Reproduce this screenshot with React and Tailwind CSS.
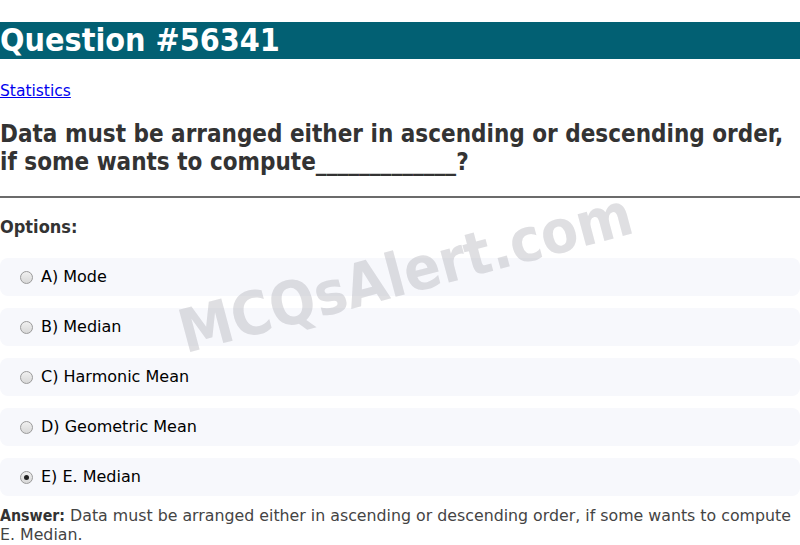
import React from "react";

const options = [
  { label: "A) Mode", checked: false },
  { label: "B) Median", checked: false },
  { label: "C) Harmonic Mean", checked: false },
  { label: "D) Geometric Mean", checked: false },
  { label: "E) E. Median", checked: true },
];

function Radio({ checked }) {
  return (
    <span className="relative inline-block w-[13px] h-[13px] rounded-full border border-[#9a9a9a] bg-gradient-to-b from-[#f0f0f0] to-[#d8d8d8] shrink-0">
      {checked && (
        <span className="absolute left-[3px] top-[3px] w-[5px] h-[5px] rounded-full bg-[#222]" />
      )}
    </span>
  );
}

export default function App() {
  return (
    <div className="relative w-[800px] h-[545px] overflow-hidden bg-white font-['DejaVu_Sans',sans-serif]">
      <div className="pt-[22px]">
        <h1 className="bg-[#026073] text-white font-['DejaVu_Sans_Condensed','DejaVu_Sans',sans-serif] font-bold text-[32px] leading-[37px] h-[37px] whitespace-nowrap">
          Question #56341
        </h1>
        <div className="mt-[22px] text-[15.5px] leading-[20px]">
          <a href="#" className="text-[#0000ee] underline">Statistics</a>
        </div>
        <h2 className="mt-[19px] font-['DejaVu_Sans_Condensed','DejaVu_Sans',sans-serif] font-bold text-[24px] leading-[28px] text-[#333]">
          Data must be arranged either in ascending or descending order, if some wants to compute_____________?
        </h2>
        <hr className="mt-[20px] border-0 border-t-2 border-[#6b6b6b]" />
        <div className="mt-[18px] font-['DejaVu_Sans_Condensed','DejaVu_Sans',sans-serif] font-bold text-[18px] leading-[22px] text-[#333]">
          Options:
        </div>
        <div className="mt-[20px] flex flex-col gap-[12px]">
          {options.map((o) => (
            <div key={o.label} className="h-[38px] rounded-[8px] bg-[#f7f8fc] flex items-center pl-[20px] gap-[8px] text-[16px] text-black">
              <Radio checked={o.checked} />
              <span>{o.label}</span>
            </div>
          ))}
        </div>
        <p className="mt-[10px] text-[15.8px] leading-[19px] text-[#444]">
          <b className="font-['DejaVu_Sans_Condensed','DejaVu_Sans',sans-serif] font-bold text-[#333]">Answer:</b> Data must be arranged either in ascending or descending order, if some wants to compute E. Median.
        </p>
      </div>
      <div className="pointer-events-none absolute left-[180px] top-[303px] -rotate-[15deg] origin-left font-['DejaVu_Sans_Condensed','DejaVu_Sans',sans-serif] font-bold text-[60px] leading-none text-[rgba(170,172,178,0.38)] whitespace-nowrap">
        MCQsAlert.com
      </div>
    </div>
  );
}
